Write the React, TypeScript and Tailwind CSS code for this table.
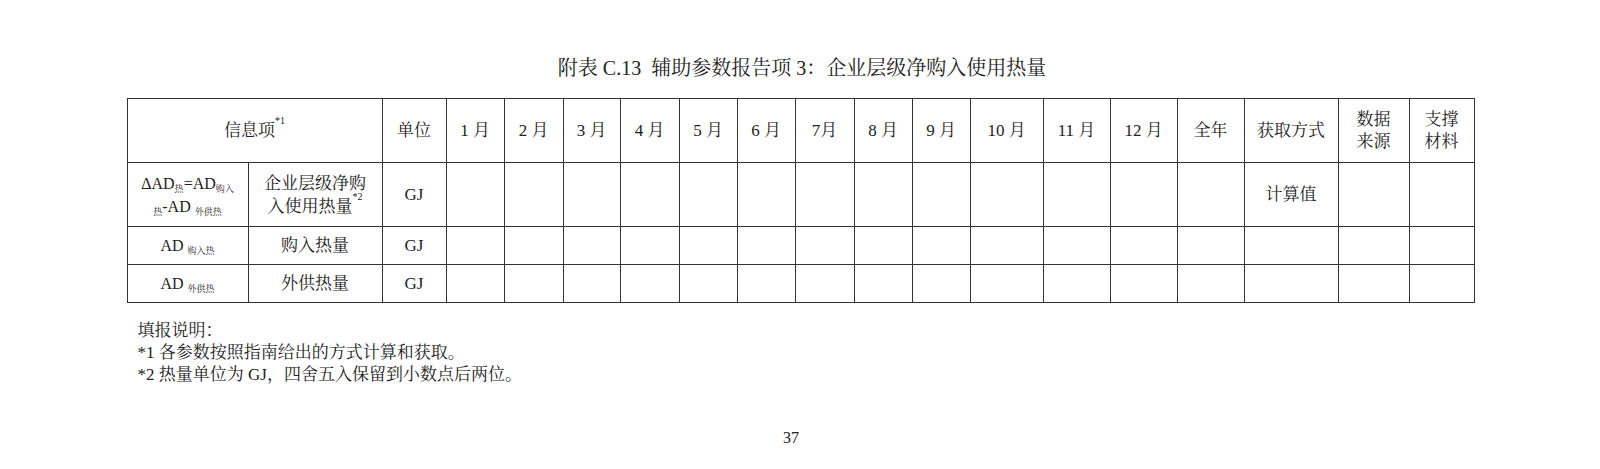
const font = "font-['Liberation_Serif','Noto_Serif_CJK_SC','Noto_Sans_CJK_SC',serif]";

const months = ["1 月", "2 月", "3 月", "4 月", "5 月", "6 月", "7月", "8 月", "9 月", "10 月", "11 月", "12 月"];

// 列宽（含边框），按原表量取
const monthWidths = ["w-[58px]", "w-[59px]", "w-[57px]", "w-[59px]", "w-[58px]", "w-[58px]", "w-[59px]", "w-[58px]", "w-[58px]", "w-[73px]", "w-[67px]", "w-[67px]"];

const cell = "border border-[#333] text-center align-middle p-0";

function Sub({ children }: { children: React.ReactNode }) {
  return <span className="text-[9px] align-[-3px] leading-none">{children}</span>;
}

function EmptyCells({ n }: { n: number }) {
  return (
    <>
      {Array.from({ length: n }).map((_, i) => (
        <td key={i} className={cell}></td>
      ))}
    </>
  );
}

export default function App() {
  return (
    <div className={`w-[1600px] h-[469px] bg-white text-[#222] ${font}`}>
      <div className="pt-[54px] w-[1347px] mx-auto">
        <h1 className="h-[28px] leading-[28px] text-[20px] text-center mb-[16px] pl-[4px]">
          附表 C.13&nbsp; 辅助参数报告项 3：企业层级净购入使用热量
        </h1>

        <table className="table-fixed border-collapse w-[1347px] text-[17px]">
          <colgroup>
            <col className="w-[121px]" />
            <col className="w-[134px]" />
            <col className="w-[64px]" />
            {monthWidths.map((w, i) => (
              <col key={i} className={w} />
            ))}
            <col className="w-[67px]" />
            <col className="w-[94px]" />
            <col className="w-[71px]" />
            <col className="w-[65px]" />
          </colgroup>
          <tbody>
            <tr className="h-[64px]">
              <td colSpan={2} className={cell}>
                信息项<sup className="text-[10px] align-[7px]">*1</sup>
              </td>
              <td className={cell}>单位</td>
              {months.map((m) => (
                <td key={m} className={cell}>{m}</td>
              ))}
              <td className={cell}>全年</td>
              <td className={cell}>获取方式</td>
              <td className={`${cell} leading-[22px]`}>数据<br />来源</td>
              <td className={`${cell} leading-[22px]`}>支撑<br />材料</td>
            </tr>
            <tr className="h-[64px]">
              <td className={`${cell} leading-[23px] text-[16px]`}>
                ΔAD<Sub>热</Sub>=AD<Sub>购入</Sub>
                <br />
                <Sub>热</Sub>-AD <Sub>外供热</Sub>
              </td>
              <td className={`${cell} leading-[23px]`}>
                企业层级净购<br />入使用热量<sup className="text-[10px] align-[7px]">*2</sup>
              </td>
              <td className={cell}>GJ</td>
              <EmptyCells n={13} />
              <td className={cell}>计算值</td>
              <EmptyCells n={2} />
            </tr>
            <tr className="h-[38px]">
              <td className={`${cell} text-[16px]`}>AD <Sub>购入热</Sub></td>
              <td className={cell}>购入热量</td>
              <td className={cell}>GJ</td>
              <EmptyCells n={16} />
            </tr>
            <tr className="h-[38px]">
              <td className={`${cell} text-[16px]`}>AD <Sub>外供热</Sub></td>
              <td className={cell}>外供热量</td>
              <td className={cell}>GJ</td>
              <EmptyCells n={16} />
            </tr>
          </tbody>
        </table>

        <div className="mt-[17px] pl-[11px] text-[17px] leading-[22px]">
          <p>填报说明：</p>
          <p>*1 各参数按照指南给出的方式计算和获取。</p>
          <p>*2 热量单位为 GJ，四舍五入保留到小数点后两位。</p>
        </div>

        <div className="mt-[42px] text-center text-[16px] leading-[20px] pr-[18px]">37</div>
      </div>
    </div>
  );
}
